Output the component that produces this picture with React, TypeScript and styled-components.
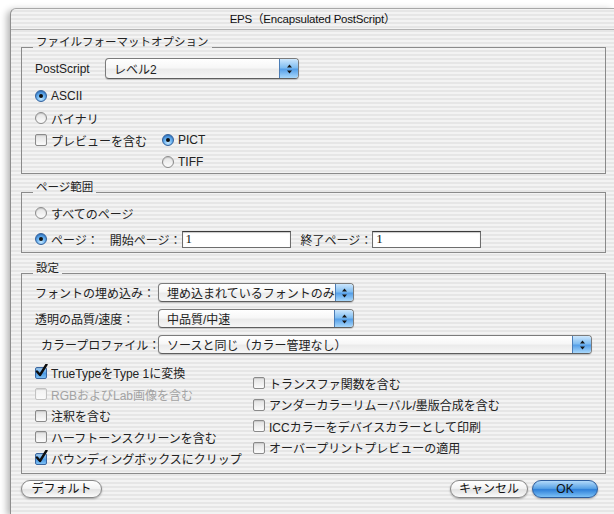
import React from "react";
import styled, { createGlobalStyle, css } from "styled-components";

const GlobalStyle = createGlobalStyle`
  html, body {
    margin: 0;
    padding: 0;
    background: #ffffff;
    overflow: hidden;
  }
  body {
    font-family: "Liberation Sans", "Noto Sans CJK JP", sans-serif;
    font-size: 12px;
    color: #222222;
  }
`;

// aqua pinstripe, pinned to the viewport so overlapping labels line up
const pinstripe = css`
  background-color: #ececec;
  background-image: repeating-linear-gradient(
    to bottom,
    #f3f3f3 0px,
    #f3f3f3 2px,
    #e6e6e6 2px,
    #e6e6e6 4px
  );
  background-attachment: fixed;
`;

const Page = styled.div`
  box-sizing: border-box;
  height: 514px;
  padding: 8px 0 0 10px;
`;

const Window = styled.div`
  ${pinstripe}
  height: 100%;
  box-sizing: border-box;
  border-left: 1px solid #8e8e8e;
  border-top: 1px solid #a8a8a8;
  border-top-left-radius: 6px;
  box-shadow: -3px 2px 7px rgba(0, 0, 0, 0.3);
`;

const TitleBar = styled.div`
  height: 20px;
  line-height: 20px;
  text-align: center;
  font-size: 11.5px;
  letter-spacing: -0.2px;
  color: #111;
  border-bottom: 1px solid #b4b4b4;
`;

const Body = styled.div`
  padding: 0 8px 0 10px;
`;

const Frame = styled.section<{ $top: number; $bottom: number }>`
  margin-top: ${(p) => p.$top}px;
  padding: 0 13px ${(p) => p.$bottom}px;
  border: 1px solid #8a8a8a;
`;

const FrameTitle = styled.h2`
  ${pinstripe}
  display: table;
  margin: -14px 0 0 -2px;
  padding: 0 3px;
  font-size: 11.5px;
  font-weight: normal;
  line-height: 16px;
`;

const PopupRow = styled.div<{ $top: number }>`
  display: flex;
  align-items: center;
  margin-top: ${(p) => p.$top}px;
`;

const RowLabel = styled.span<{ $w: number; $indent?: number }>`
  width: ${(p) => p.$w}px;
  padding-left: ${(p) => p.$indent ?? 0}px;
  box-sizing: border-box;
  flex: none;
  white-space: nowrap;
`;

const Popup = styled.div<{ $w: number; $h: number }>`
  width: ${(p) => p.$w}px;
  height: ${(p) => p.$h}px;
  box-sizing: border-box;
  display: flex;
  border: 1px solid #7b7b7b;
  border-bottom-color: #5e5e5e;
  border-radius: 4px;
  overflow: hidden;
  background: linear-gradient(#ffffff, #f7f7f7 45%, #ebebeb 55%, #f6f6f6);
  box-shadow: 0 1px 1px rgba(0, 0, 0, 0.18);
`;

const PopupText = styled.span`
  flex: 1;
  display: flex;
  align-items: center;
  padding-left: 8px;
  white-space: nowrap;
`;

const PopupArrows = styled.span`
  width: 18px;
  flex: none;
  display: flex;
  align-items: center;
  justify-content: center;
  border-left: 1px solid #4b7db6;
  background: linear-gradient(#cde7fd, #80bdf1 46%, #559fe8 54%, #a9d8fb);
`;

const OptionList = styled.div<{ $top: number; $row: number }>`
  display: grid;
  grid-auto-rows: ${(p) => p.$row}px;
  margin-top: ${(p) => p.$top}px;
`;

const TwoCols = styled.div<{ $left: number }>`
  display: grid;
  grid-template-columns: ${(p) => p.$left}px auto;
  grid-auto-rows: 22px;
`;

const Option = styled.label<{ $disabled?: boolean }>`
  display: flex;
  align-items: center;
  gap: 4px;
  white-space: nowrap;
  color: ${(p) => (p.$disabled ? "#a3a3a3" : "inherit")};
`;

const Radio = styled.span<{ $on?: boolean }>`
  width: 12px;
  height: 12px;
  box-sizing: border-box;
  flex: none;
  display: grid;
  place-items: center;
  border-radius: 50%;
  border: 1px solid ${(p) => (p.$on ? "#31609c" : "#8b8b8b")};
  background: ${(p) =>
    p.$on
      ? "radial-gradient(circle at 50% 78%, #c6e8ff 0%, #67b0ef 45%, #2a72c9 100%)"
      : "linear-gradient(#e4e4e4, #fbfbfb)"};
  box-shadow: inset 0 1px 1px rgba(0, 0, 0, 0.15);

  &::after {
    content: "";
    width: 4px;
    height: 4px;
    border-radius: 50%;
    background: ${(p) => (p.$on ? "#101010" : "transparent")};
  }
`;

const Box = styled.span<{ $on?: boolean; $disabled?: boolean }>`
  width: 12px;
  height: 12px;
  box-sizing: border-box;
  flex: none;
  display: flex;
  align-items: flex-end;
  justify-content: center;
  overflow: visible;
  border-radius: 2px;
  border: 1px solid
    ${(p) => (p.$on ? "#3a66a0" : p.$disabled ? "#c2c2c2" : "#8a8a8a")};
  background: ${(p) =>
    p.$on
      ? "linear-gradient(#a8d6fb, #4e9ce6 55%, #7ec0f4)"
      : p.$disabled
      ? "linear-gradient(#f2f2f2, #fafafa)"
      : "linear-gradient(#e2e2e2, #fbfbfb)"};
  box-shadow: inset 0 1px 1px rgba(0, 0, 0, 0.12);

  svg {
    flex: none;
  }
`;

const RangeRow = styled.div`
  display: flex;
  align-items: center;
  height: 22px;
  margin-top: 4px;
`;

const FieldLabel = styled.span<{ $gap: number }>`
  margin-left: ${(p) => p.$gap}px;
  white-space: nowrap;
`;

const Field = styled.input`
  width: 109px;
  height: 17px;
  box-sizing: border-box;
  margin: 0;
  padding: 0 3px;
  border: 1px solid #6d6d6d;
  border-top-color: #3a3a3a;
  background: #ffffff;
  box-shadow: inset 0 1px 1px rgba(0, 0, 0, 0.22);
  font-family: "Liberation Serif", serif;
  font-size: 13px;
  color: #111;
  outline: none;
`;

const SettingsGrid = styled.div`
  display: grid;
  grid-template-columns: 218px auto;
  margin-top: 8px;
`;

const Column = styled.div<{ $top: number }>`
  display: grid;
  grid-auto-rows: 21.5px;
  padding-top: ${(p) => p.$top}px;
`;

const ButtonBar = styled.div`
  display: flex;
  align-items: center;
  margin-top: 6px;
  padding-right: 8px;
`;

const Spacer = styled.div`
  flex: 1;
`;

const Button = styled.button<{ $w: number; $primary?: boolean }>`
  width: ${(p) => p.$w}px;
  height: 18px;
  margin: 0 0 0 4px;
  padding: 0;
  border-radius: 9px;
  font-family: inherit;
  font-size: 12px;
  line-height: 16px;
  color: #111;
  border: 1px solid ${(p) => (p.$primary ? "#2d5c9b" : "#878787")};
  background: ${(p) =>
    p.$primary
      ? "linear-gradient(#b2dafa 0%, #5aa3e6 46%, #2f80d8 54%, #7cc1f6 100%)"
      : "linear-gradient(#ffffff 0%, #f3f3f3 46%, #e2e2e2 54%, #fbfbfb 100%)"};
  box-shadow: 0 1px 2px rgba(0, 0, 0, 0.3);

  &:first-child {
    margin-left: 0;
  }
`;

const Arrows = () => (
  <svg width="7" height="10" viewBox="0 0 7 10">
    <path d="M3.5 0.5 L6 3.5 H1 Z M1 6.5 H6 L3.5 9.5 Z" fill="#151515" />
  </svg>
);

const Tick = () => (
  <svg width="13" height="14" viewBox="0 0 13 14">
    <path
      d="M2 7.5 L5 11 L11.5 0.5"
      fill="none"
      stroke="#0d0d0d"
      strokeWidth="2.4"
      strokeLinecap="round"
      strokeLinejoin="round"
    />
  </svg>
);

interface PopupProps {
  value: string;
  w: number;
  h: number;
}

const Select = ({ value, w, h }: PopupProps) => (
  <Popup $w={w} $h={h}>
    <PopupText>{value}</PopupText>
    <PopupArrows>
      <Arrows />
    </PopupArrows>
  </Popup>
);

const RadioItem = ({ on, children }: { on?: boolean; children: React.ReactNode }) => (
  <Option>
    <Radio $on={on} />
    {children}
  </Option>
);

const CheckItem = ({
  on,
  disabled,
  children,
}: {
  on?: boolean;
  disabled?: boolean;
  children: React.ReactNode;
}) => (
  <Option $disabled={disabled}>
    <Box $on={on} $disabled={disabled}>
      {on && <Tick />}
    </Box>
    {children}
  </Option>
);

const leftChecks = [
  { label: "TrueTypeをType 1に変換", on: true },
  { label: "RGBおよびLab画像を含む", disabled: true },
  { label: "注釈を含む" },
  { label: "ハーフトーンスクリーンを含む" },
  { label: "バウンディングボックスにクリップ", on: true },
];

const rightChecks = [
  "トランスファ関数を含む",
  "アンダーカラーリムーバル/墨版合成を含む",
  "ICCカラーをデバイスカラーとして印刷",
  "オーバープリントプレビューの適用",
];

const settings = [
  { label: "フォントの埋め込み：", value: "埋め込まれているフォントのみ", w: 196 },
  { label: "透明の品質/速度：", value: "中品質/中速", w: 196 },
  { label: "カラープロファイル：", value: "ソースと同じ（カラー管理なし）", w: 435, indent: 6 },
];

const App = () => {
  return (
    <Page>
      <GlobalStyle />
      <Window>
        <TitleBar>EPS（Encapsulated PostScript）</TitleBar>
        <Body>
          <Frame $top={17} $bottom={0}>
            <FrameTitle>ファイルフォーマットオプション</FrameTitle>
            <PopupRow $top={8}>
              <RowLabel $w={70}>PostScript</RowLabel>
              <Select value="レベル2" w={194} h={21} />
            </PopupRow>
            <OptionList $top={6} $row={22}>
              <RadioItem on>ASCII</RadioItem>
              <RadioItem>バイナリ</RadioItem>
            </OptionList>
            <TwoCols $left={127}>
              <CheckItem>プレビューを含む</CheckItem>
              <RadioItem on>PICT</RadioItem>
              <span />
              <RadioItem>TIFF</RadioItem>
            </TwoCols>
          </Frame>

          <Frame $top={18} $bottom={2}>
            <FrameTitle>ページ範囲</FrameTitle>
            <OptionList $top={7} $row={22}>
              <RadioItem>すべてのページ</RadioItem>
            </OptionList>
            <RangeRow>
              <RadioItem on>ページ：</RadioItem>
              <FieldLabel $gap={11}>開始ページ：</FieldLabel>
              <Field defaultValue="1" />
              <FieldLabel $gap={10}>終了ページ：</FieldLabel>
              <Field defaultValue="1" />
            </RangeRow>
          </Frame>

          <Frame $top={20} $bottom={3.5}>
            <FrameTitle>設定</FrameTitle>
            {settings.map((s) => (
              <PopupRow key={s.label} $top={7}>
                <RowLabel $w={123} $indent={s.indent}>
                  {s.label}
                </RowLabel>
                <Select value={s.value} w={s.w} h={19} />
              </PopupRow>
            ))}
            <SettingsGrid>
              <Column $top={0}>
                {leftChecks.map((c) => (
                  <CheckItem key={c.label} on={c.on} disabled={c.disabled}>
                    {c.label}
                  </CheckItem>
                ))}
              </Column>
              <Column $top={10.5}>
                {rightChecks.map((label) => (
                  <CheckItem key={label}>{label}</CheckItem>
                ))}
              </Column>
            </SettingsGrid>
          </Frame>

          <ButtonBar>
            <Button $w={81}>デフォルト</Button>
            <Spacer />
            <Button $w={78}>キャンセル</Button>
            <Button $w={66} $primary>
              OK
            </Button>
          </ButtonBar>
        </Body>
      </Window>
    </Page>
  );
};

export default App;
